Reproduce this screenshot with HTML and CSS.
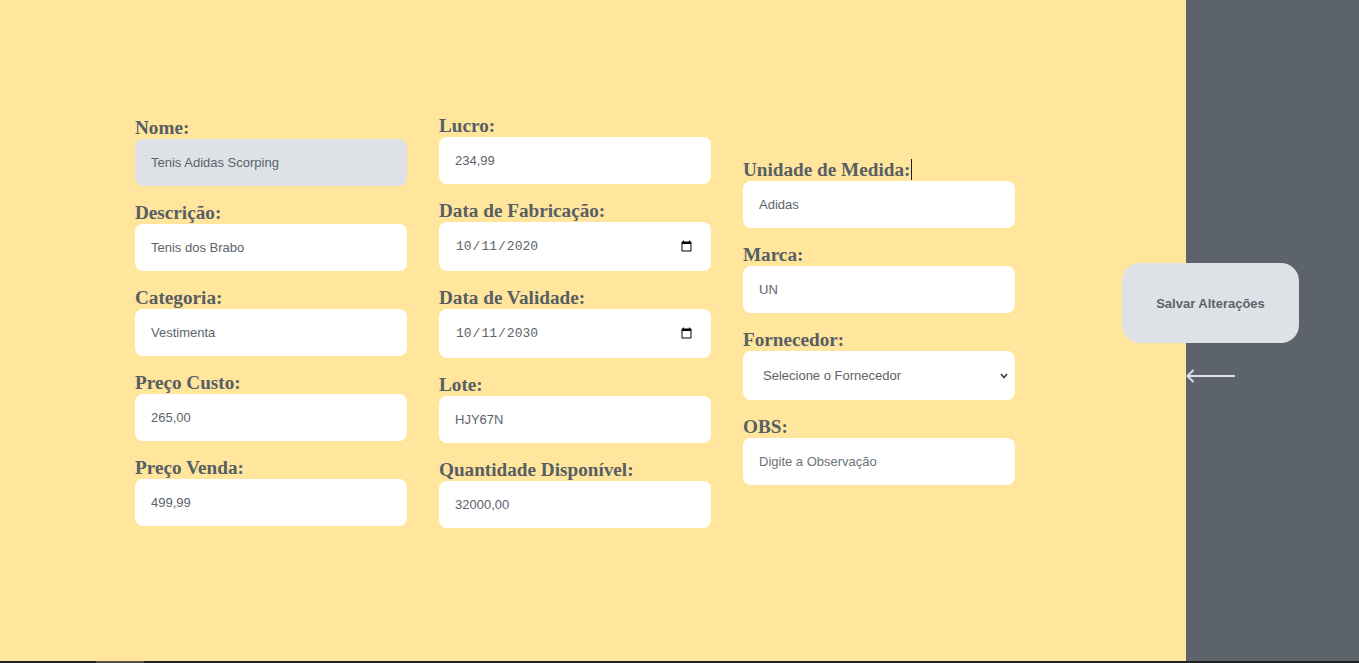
FILE: index.html
```html
<!DOCTYPE html>
<html lang="pt-BR">
<head>
<meta charset="utf-8">
<title>Editar Produto</title>
<link rel="stylesheet" href="styles.css">
</head>
<body>
<div class="page">
  <main class="main">
    <div class="col">
      <div class="field">
        <label class="label">Nome:</label>
        <input class="input input-readonly" type="text" value="Tenis Adidas Scorping" readonly>
      </div>
      <div class="field">
        <label class="label">Descrição:</label>
        <input class="input" type="text" value="Tenis dos Brabo">
      </div>
      <div class="field">
        <label class="label">Categoria:</label>
        <input class="input" type="text" value="Vestimenta">
      </div>
      <div class="field">
        <label class="label">Preço Custo:</label>
        <input class="input" type="text" value="265,00">
      </div>
      <div class="field">
        <label class="label">Preço Venda:</label>
        <input class="input" type="text" value="499,99">
      </div>
    </div>
    <div class="col">
      <div class="field">
        <label class="label">Lucro:</label>
        <input class="input" type="text" value="234,99">
      </div>
      <div class="field">
        <label class="label">Data de Fabricação:</label>
        <input class="input input-date" type="date" value="2020-10-11">
      </div>
      <div class="field">
        <label class="label">Data de Validade:</label>
        <input class="input input-date" type="date" value="2030-10-11">
      </div>
      <div class="field">
        <label class="label">Lote:</label>
        <input class="input" type="text" value="HJY67N">
      </div>
      <div class="field">
        <label class="label">Quantidade Disponível:</label>
        <input class="input" type="text" value="32000,00">
      </div>
    </div>
    <div class="col">
      <div class="field">
        <label class="label">Unidade de Medida:<span class="caret"></span></label>
        <input class="input" type="text" value="Adidas">
      </div>
      <div class="field">
        <label class="label">Marca:</label>
        <input class="input" type="text" value="UN">
      </div>
      <div class="field">
        <label class="label">Fornecedor:</label>
        <div class="select-wrap">
          <select class="input select">
            <option>Selecione o Fornecedor</option>
          </select>
          <svg class="chevron" width="8" height="6" viewBox="0 0 8 6"><polyline points="1,1 4,4.5 7,1" fill="none" stroke="#3c3c3c" stroke-width="1.6"/></svg>
        </div>
      </div>
      <div class="field">
        <label class="label">OBS:</label>
        <input class="input" type="text" placeholder="Digite a Observação">
      </div>
    </div>
  </main>
  <aside class="sidebar">
    <button class="save-btn" type="button">Salvar Alterações</button>
    <svg class="back-arrow" width="50" height="14" viewBox="0 0 50 14">
      <line x1="1" y1="7" x2="49" y2="7" stroke="#dee2e6" stroke-width="2"/>
      <polyline points="7.5,1 1.5,7 7.5,13" fill="none" stroke="#dee2e6" stroke-width="2"/>
    </svg>
  </aside>
</div>
<div class="hscroll"><span class="hscroll-thumb"></span></div>
</body>
</html>
```
FILE: styles.css
```css
* {
  box-sizing: border-box;
}

html, body {
  margin: 0;
  height: 100%;
}

body {
  display: flex;
  flex-direction: column;
  background: #ffe69c;
  overflow: hidden;
  font-family: "Liberation Sans", Arial, sans-serif;
}

.page {
  flex: 1;
  display: flex;
  min-height: 0;
}

.main {
  flex: 1;
  display: flex;
  align-items: center;
  gap: 32px;
  padding-left: 135px;
  padding-bottom: 2px;
}

.col {
  width: 272px;
  display: flex;
  flex-direction: column;
}

.field {
  margin-bottom: 16px;
}

.label {
  display: block;
  font-family: "Liberation Serif", "Times New Roman", serif;
  font-weight: bold;
  font-size: 19.2px;
  line-height: 22px;
  color: #575e64;
  white-space: nowrap;
}

.caret {
  display: inline-block;
  width: 1px;
  height: 21px;
  background: #202124;
  vertical-align: top;
  margin-left: 1px;
}

.input {
  display: block;
  width: 100%;
  height: 47px;
  border: none;
  border-radius: 8px;
  background: #ffffff;
  padding: 0 16px;
  font-family: "Liberation Sans", Arial, sans-serif;
  font-size: 13px;
  color: #5c636a;
  outline: none;
}

.input::placeholder {
  color: #6c737a;
}

.input-readonly {
  background: #dee2e6;
}

.input-date {
  height: 49px;
  font-family: "Liberation Mono", "Courier New", monospace;
  padding: 0 16px 0 16px;
}

.select-wrap {
  position: relative;
}

.select {
  height: 49px;
  padding-left: 20px;
  -webkit-appearance: none;
  appearance: none;
}

.chevron {
  position: absolute;
  right: 7px;
  top: 22px;
}

.sidebar {
  width: 173px;
  flex: none;
  background: #5c636a;
  display: flex;
  flex-direction: column;
  padding-top: 263px;
}

.save-btn {
  width: 177px;
  height: 80px;
  margin-left: -64px;
  border: none;
  border-radius: 18px;
  background: #dee2e6;
  font-family: "Liberation Sans", Arial, sans-serif;
  font-weight: bold;
  font-size: 13px;
  color: #5c636a;
}

.back-arrow {
  display: block;
  margin-top: 26px;
}

.hscroll {
  height: 2px;
  flex: none;
  background: #202124;
  display: flex;
}

.hscroll-thumb {
  width: 48px;
  margin-left: 96px;
  background: #505050;
}
```
